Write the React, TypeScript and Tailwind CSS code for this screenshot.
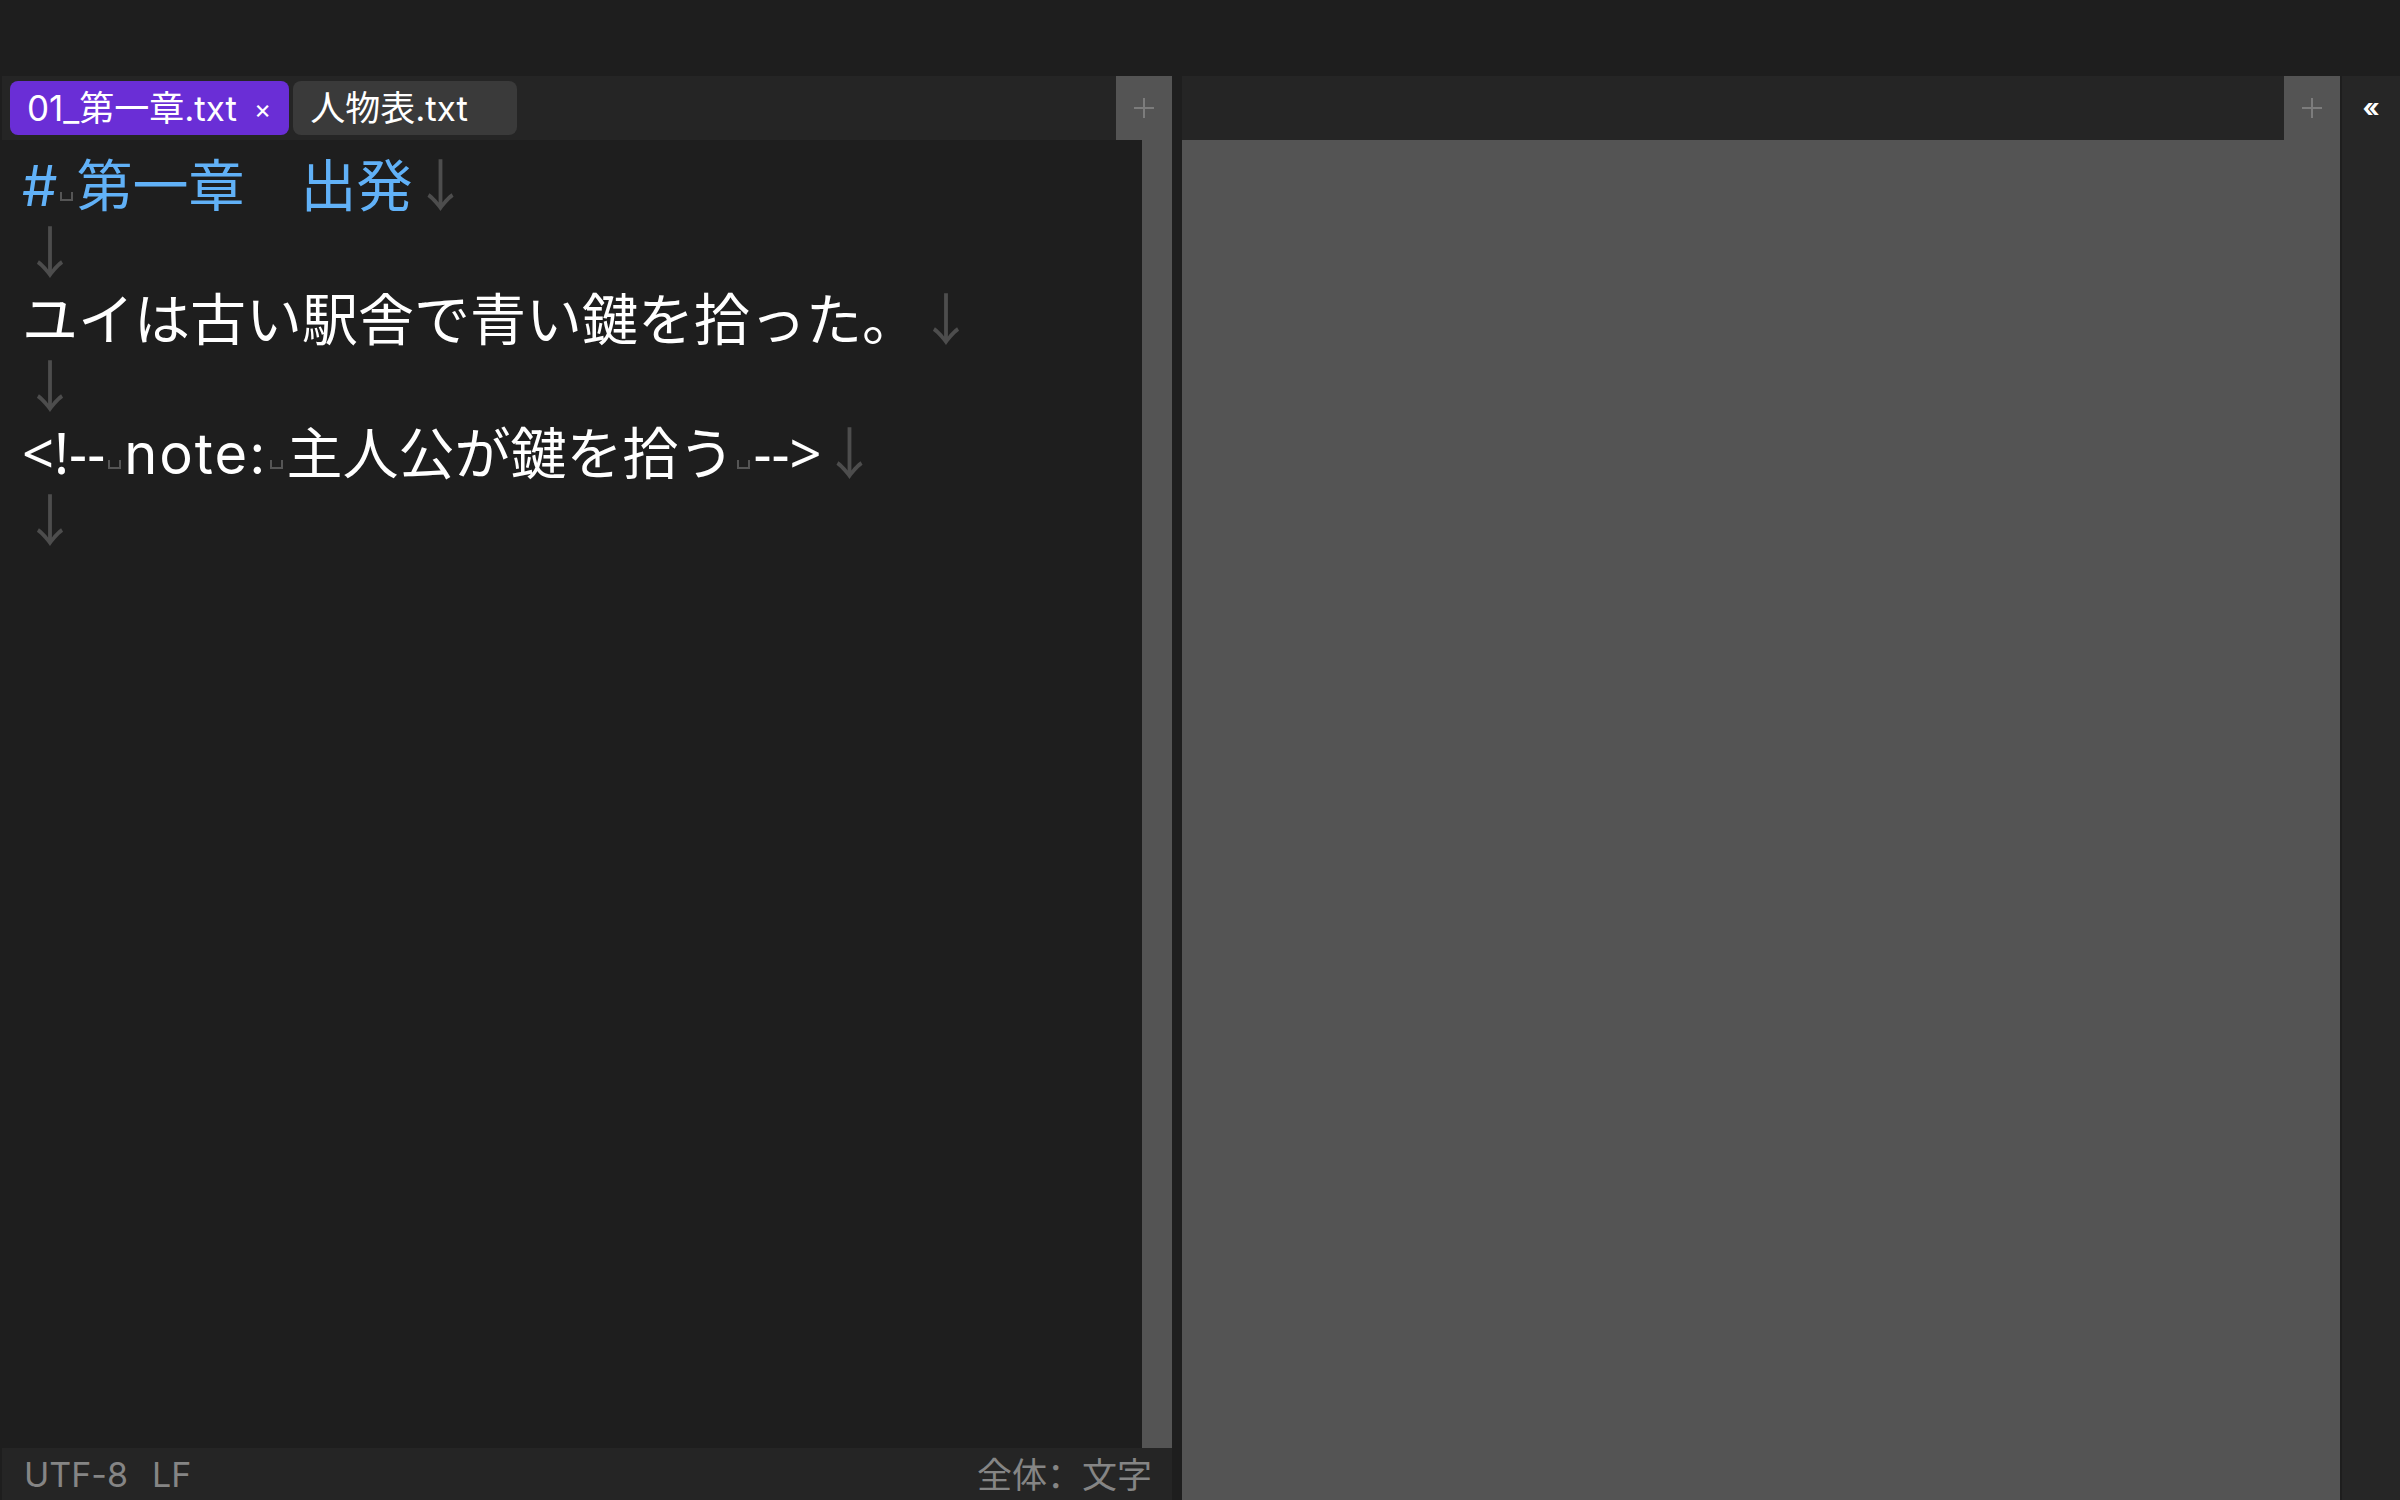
import React from "react";

const Arrow = () => (
  <span className="text-[#4d4d4d] [font-family:'Noto_Sans_CJK_JP',sans-serif]">↓</span>
);

const Sp = () => (
  <span className="inline-block w-[19px] align-baseline">
    <span className="mx-auto mb-[5px] block h-[9px] w-[13px] border-x-2 border-b-2 border-[#555555]" />
  </span>
);

const PlusButton = () => (
  <div className="flex w-[56px] shrink-0 items-center justify-center bg-[#545454]">
    <svg width="22" height="22" viewBox="0 0 22 22">
      <path d="M11 1v20M1 11h20" stroke="#7c7c7c" strokeWidth="2" />
    </svg>
  </div>
);

const Line = ({ children }: { children?: React.ReactNode }) => (
  <div className="h-[67px] whitespace-pre leading-[67px]">{children}</div>
);

export default function App() {
  return (
    <div className="flex h-[1500px] w-[2400px] flex-col bg-[#1e1e1e] [font-family:Inter,'Noto_Sans_CJK_JP',sans-serif] [font-feature-settings:'calt'_0,'liga'_0] [font-variant-ligatures:none]">
      <div className="h-[76px] shrink-0 bg-[#1e1e1e]" />

      <div className="flex min-h-0 flex-1">
        {/* left pane */}
        <div className="ml-[2px] flex w-[1170px] shrink-0 flex-col">
          <div className="flex h-[64px] shrink-0 bg-[#252525]">
            <div className="flex flex-1 items-center gap-[4px] pl-[8px]">
              <div className="flex h-[54px] items-center rounded-[8px] bg-[#6a2ed6] pl-[17px] pr-[18px] text-[35px] text-white">
                <span>01_第一章.txt</span>
                <span className="ml-[17px] text-[26px]">×</span>
              </div>
              <div className="flex h-[54px] w-[224px] items-center rounded-[8px] bg-[#3a3a3a] pl-[17px] text-[35px] text-white">
                人物表.txt
              </div>
            </div>
            <PlusButton />
          </div>

          <div className="flex min-h-0 flex-1">
            <div className="flex-1 pl-[20px] pt-[8px] text-[56px] text-white">
              <Line>
                <span className="text-[#61b1f7]">
                  #<Sp />第一章　出発
                </span>
                <Arrow />
              </Line>
              <Line>
                <Arrow />
              </Line>
              <Line>
                ユイは古い駅舎で青い鍵を拾った。
                <Arrow />
              </Line>
              <Line>
                <Arrow />
              </Line>
              <Line>
                <span className="[font-family:'Noto_Sans',sans-serif]">{"<!--"}</span>
                <Sp />
                <span className="tracking-[2px]">note:</span>
                <Sp />
                主人公が鍵を拾う
                <Sp />
                <span className="[font-family:'Noto_Sans',sans-serif]">{"-->"}</span>
                <Arrow />
              </Line>
              <Line>
                <Arrow />
              </Line>
            </div>
            <div className="w-[30px] shrink-0 bg-[#545454]" />
          </div>

          <div className="flex h-[52px] shrink-0 items-center justify-between bg-[#252525] pl-[22px] pr-[20px] text-[34px] text-[#858585]">
            <div className="flex gap-[24px]">
              <span>UTF-8</span>
              <span>LF</span>
            </div>
            <span className="text-[35px]">
              全体<span className="[font-family:'Noto_Sans_CJK_SC',sans-serif]">：</span>文字
            </span>
          </div>
        </div>

        <div className="w-[10px] shrink-0 bg-[#1e1e1e]" />

        {/* right pane */}
        <div className="flex w-[1158px] shrink-0 flex-col">
          <div className="flex h-[64px] shrink-0 bg-[#252525]">
            <div className="flex-1" />
            <PlusButton />
          </div>
          <div className="flex-1 bg-[#545454]" />
        </div>

        <div className="w-[2px] shrink-0 bg-[#1e1e1e]" />

        {/* side strip */}
        <div className="flex flex-1 justify-center bg-[#262626] pt-[14px]">
          <span className="text-[26px] font-bold leading-[36px] text-white">«</span>
        </div>
      </div>
    </div>
  );
}
